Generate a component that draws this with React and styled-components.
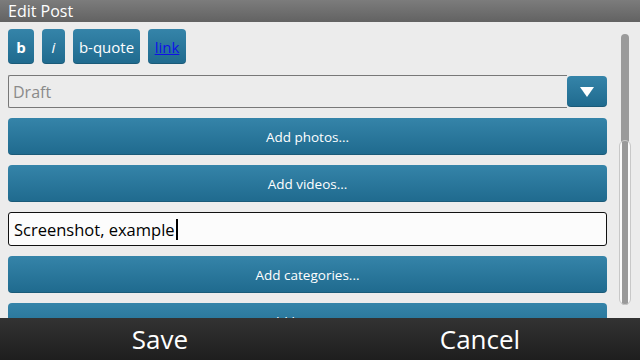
import React from "react";
import styled, { createGlobalStyle } from "styled-components";

const GlobalStyle = createGlobalStyle`
  html, body {
    margin: 0;
    padding: 0;
    background: #ececec;
  }
  body {
    font-family: "Open Sans", "DejaVu Sans", sans-serif;
  }
`;

const Screen = styled.div`
  width: 640px;
  height: 360px;
  display: flex;
  flex-direction: column;
  overflow: hidden;
  background: #ececec;
`;

const TitleBar = styled.div`
  height: 22px;
  flex: none;
  display: flex;
  align-items: center;
  padding-left: 8px;
  background: linear-gradient(#7c7c7c, #626262);
  color: #fff;
  font-size: 16px;
  line-height: 22px;
`;

const Body = styled.div`
  flex: 1;
  display: flex;
  min-height: 0;
`;

const Content = styled.div`
  flex: 1;
  display: flex;
  flex-direction: column;
  gap: 10px;
  padding: 7px 6px 0 8px;
  overflow: hidden;
  & > * {
    flex: none;
  }
`;

const Toolbar = styled.div`
  display: flex;
  gap: 8px;
  margin-bottom: 1px;
`;

const blue = `
  background: linear-gradient(#3584a9, #1f6a8e);
  border: none;
  border-radius: 4px;
  box-shadow: inset 0 -1px 0 rgba(0, 0, 0, 0.15);
  color: #fff;
  font-family: "Open Sans", "DejaVu Sans", sans-serif;
`;

const ToolButton = styled.button`
  ${blue}
  height: 35px;
  width: ${(p) => p.$w}px;
  padding: 0;
  font-size: 15px;
  font-weight: ${(p) => (p.$bold ? 700 : 400)};
  font-style: ${(p) => (p.$italic ? "italic" : "normal")};
`;

const LinkText = styled.span`
  color: #1010e8;
  text-decoration: underline;
`;

const SelectRow = styled.div`
  display: flex;
  height: 33px;
`;

const SelectField = styled.div`
  flex: 1;
  display: flex;
  align-items: center;
  padding-left: 4px;
  border: 1px solid #787878;
  border-right: none;
  border-radius: 2px 0 0 2px;
  color: #8a8a8a;
  font-size: 16px;
`;

const DropButton = styled.div`
  ${blue}
  width: 40px;
  margin: 1px 0;
  display: flex;
  align-items: center;
  justify-content: center;
`;

const ActionButton = styled.button`
  ${blue}
  height: 37px;
  font-size: 13.5px;
  text-align: center;
`;

const TextInput = styled.div`
  height: 34px;
  box-sizing: border-box;
  display: flex;
  align-items: center;
  padding-left: 5px;
  background: #fcfcfc;
  border: 1px solid #111;
  border-radius: 3px;
  color: #000;
  font-size: 16.5px;
`;

const Caret = styled.span`
  display: inline-block;
  width: 2px;
  height: 21px;
  margin-left: 1px;
  background: #000;
`;

const ScrollColumn = styled.div`
  width: 27px;
  flex: none;
  display: flex;
  justify-content: center;
  padding: 12px 0 13px;
  box-sizing: border-box;
`;

const Track = styled.div`
  position: relative;
  width: 8px;
  margin-left: -3px;
  border-radius: 4px;
  background: #9a9a9a;
`;

const Thumb = styled.div`
  position: absolute;
  top: 106px;
  bottom: 0;
  left: -2px;
  right: -2px;
  border-radius: 6px;
  border: 1px solid #c8c8c8;
  background: linear-gradient(90deg, #fafafa 0 2px, #999 2px calc(100% - 2px), #fafafa calc(100% - 2px));
`;

const SoftKeys = styled.div`
  height: 42px;
  flex: none;
  display: grid;
  grid-template-columns: 1fr 1fr;
  background: linear-gradient(#333, #1e1e1e);
  color: #fff;
  font-size: 26px;
`;

const SoftKey = styled.div`
  display: flex;
  align-items: center;
  justify-content: center;
`;

export default function App() {
  return (
    <Screen>
      <GlobalStyle />
      <TitleBar>Edit Post</TitleBar>
      <Body>
        <Content>
          <Toolbar>
            <ToolButton $w={26} $bold>b</ToolButton>
            <ToolButton $w={23} $italic>i</ToolButton>
            <ToolButton $w={67}>b-quote</ToolButton>
            <ToolButton $w={38}>
              <LinkText>link</LinkText>
            </ToolButton>
          </Toolbar>
          <SelectRow>
            <SelectField>Draft</SelectField>
            <DropButton>
              <svg width="14" height="10" viewBox="0 0 14 10">
                <path d="M0 0 H14 L7 10 Z" fill="#fff" />
              </svg>
            </DropButton>
          </SelectRow>
          <ActionButton>Add photos...</ActionButton>
          <ActionButton>Add videos...</ActionButton>
          <TextInput>
            Screenshot, example
            <Caret />
          </TextInput>
          <ActionButton>Add categories...</ActionButton>
          <ActionButton>Add location...</ActionButton>
        </Content>
        <ScrollColumn>
          <Track>
            <Thumb />
          </Track>
        </ScrollColumn>
      </Body>
      <SoftKeys>
        <SoftKey>Save</SoftKey>
        <SoftKey>Cancel</SoftKey>
      </SoftKeys>
    </Screen>
  );
}
